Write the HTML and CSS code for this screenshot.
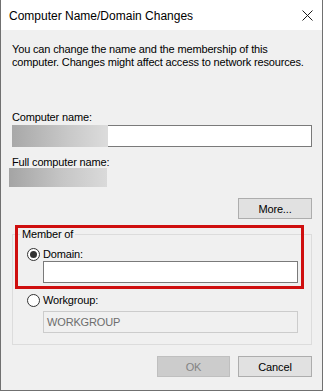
FILE: index.html
```html
<!DOCTYPE html>
<html lang="en">
<head>
  <meta charset="UTF-8" />
  <title>Computer Name/Domain Changes</title>
  <link rel="stylesheet" href="styles.css">
</head>
<body>

<div class="window">
  <div class="titlebar">
    <span class="title">Computer Name/Domain Changes</span>
    <svg class="close" width="11" height="11" viewBox="0 0 11 11">
      <path d="M0.5 0.5 L10.5 10.5 M10.5 0.5 L0.5 10.5" stroke="#1a1a1a" stroke-width="1" fill="none"/>
    </svg>
  </div>

  <div class="content">
    <p class="intro">
      You can change the name and the membership of this<br>
      computer. Changes might affect access to network resources.
    </p>

    <div class="label first">Computer name:</div>
    <div class="name-field">
      <span class="blurred"></span>
      <span class="name-input"></span>
    </div>

    <div class="label full">Full computer name:</div>
    <div class="full-name"></div>

    <div class="more-row">
      <button class="btn more">More...</button>
    </div>

    <fieldset class="member">
      <legend>Member of</legend>
      <div class="radio-row domain-row">
        <span class="radio checked"></span>
        <span>Domain:</span>
      </div>
      <div class="textbox"></div>

      <div class="radio-row workgroup-row">
        <span class="radio"></span>
        <span>Workgroup:</span>
      </div>
      <div class="textbox disabled">WORKGROUP</div>
    </fieldset>

    <div class="actions">
      <button class="btn ok" disabled>OK</button>
      <button class="btn cancel">Cancel</button>
    </div>
  </div>

  <!-- highlight drawn over the dialog -->
  <div class="highlight"></div>
</div>

</body>
</html>
```

FILE: styles.css
```css
html, body {
  margin: 0;
  padding: 0;
  background: #f0f0f0;
}

.window {
  position: relative;
  width: 323px;
  height: 391px;
  box-sizing: border-box;
  background: #f0f0f0;
  border: 1px solid #707070;
  border-top: none;
  font-family: 'Liberation Sans', Arial, sans-serif;
  font-size: 11px;
  letter-spacing: -0.15px;
  color: #000;
}

.titlebar {
  height: 30px;
  background: #fff;
  display: flex;
  align-items: center;
  justify-content: space-between;
  padding: 1px 9px 0 8px;
  box-sizing: border-box;
}

.title {
  font-size: 12px;
  letter-spacing: 0;
  color: #000;
}

.close {
  margin-top: -1px;
}

.content {
  padding: 0 10px 0 11px;
}

.intro {
  margin: 13px 0 0;
  line-height: 13px;
  white-space: nowrap;
}

.label {
  line-height: 13px;
}

.label.first {
  margin-top: 42px;
}

.label.full {
  margin-top: 9px;
}

.name-field {
  display: flex;
  height: 22px;
  margin-top: 1px;
}

.blurred {
  width: 96px;
  background: linear-gradient(90deg, #a8a8a8, #c9c9c9 60%, #dcdcdc);
}

.name-input {
  flex: 1;
  background: #fff;
  border: 1px solid #7a7a7a;
  border-left: none;
}

.full-name {
  width: 98px;
  height: 19px;
  margin: -1px 0 0 -3px;
  background: linear-gradient(90deg, #a4a4a4, #c6c6c6 55%, #dadada);
}

.more-row {
  display: flex;
  justify-content: flex-end;
  margin-top: 11px;
}

.btn {
  height: 21px;
  padding: 0;
  font-family: 'Liberation Sans', Arial, sans-serif;
  font-size: 11px;
  letter-spacing: -0.15px;
  color: #000;
  background: #e1e1e1;
  border: 1px solid #adadad;
  border-radius: 0;
}

.btn.more,
.btn.cancel {
  width: 74px;
}

.btn.ok {
  width: 73px;
  background: #cccccc;
  border-color: #bfbfbf;
  color: #838383;
}

.member {
  margin: 9px 0 0;
  padding: 0 0 11px 14px;
  border: 1px solid #dcdcdc;
  min-width: 0;
}

.member legend {
  padding: 0 2px;
  margin-left: -7px;
  line-height: 13px;
}

.radio-row {
  display: flex;
  align-items: center;
  gap: 3px;
  height: 13px;
  line-height: 13px;
}

.domain-row {
  margin-top: 7px;
}

.workgroup-row {
  margin-top: 11px;
}

.radio {
  width: 13px;
  height: 13px;
  box-sizing: border-box;
  border: 1px solid #333;
  border-radius: 50%;
  background: #fff;
  display: flex;
  align-items: center;
  justify-content: center;
}

.radio.checked::after {
  content: '';
  width: 7px;
  height: 7px;
  border-radius: 50%;
  background: #333;
}

.textbox {
  width: 255px;
  height: 22px;
  margin-left: 16px;
  box-sizing: border-box;
  background: #fff;
  border: 1px solid #7a7a7a;
  padding-left: 3px;
  line-height: 20px;
}

.workgroup-row + .textbox {
  margin-top: 4px;
}

.textbox.disabled {
  background: #f0f0f0;
  border-color: #cccccc;
  color: #6d6d6d;
}

.actions {
  display: flex;
  justify-content: flex-end;
  gap: 8px;
  margin-top: 11px;
}

.highlight {
  position: absolute;
  left: 14px;
  top: 225px;
  width: 289px;
  height: 64px;
  box-sizing: border-box;
  border: 3px solid #cf0f0f;
}
```
